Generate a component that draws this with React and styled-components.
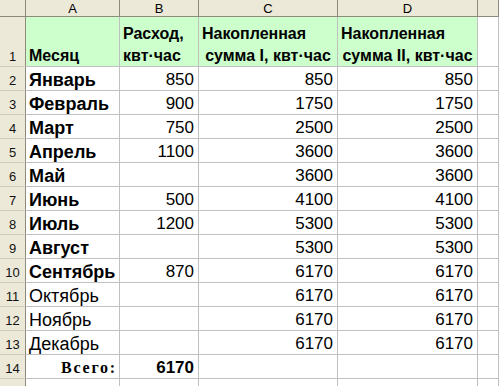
import React from "react";
import styled, { createGlobalStyle } from "styled-components";

const Global = createGlobalStyle`
  html, body { margin: 0; padding: 0; background: #fff; overflow: hidden; }
  body { font-family: "Liberation Sans", Arial, sans-serif; }
`;

const HEAD_LINE = "#8d8a7c";
const HEAD_SOFT = "#cfcbbd";
const GRID = "#c0c0c0";

const Sheet = styled.div`
  display: grid;
  grid-template-columns: 26px 94px 79px 139px 140px 1fr;
  grid-template-rows: 17px 50px repeat(14, 24px);
  width: 499px;
  height: 386px;
  overflow: hidden;
`;

const ColHead = styled.div`
  box-sizing: border-box;
  background: #ece9d8;
  border-right: 1px solid ${HEAD_LINE};
  border-bottom: 1px solid ${HEAD_LINE};
  display: flex;
  align-items: center;
  justify-content: center;
  font-size: 13px;
  line-height: 13px;
  color: #000;
  padding-top: 1px;
`;

const RowHead = styled.div`
  box-sizing: border-box;
  background: #ece9d8;
  border-right: 1px solid ${HEAD_LINE};
  border-bottom: 1px solid ${HEAD_SOFT};
  display: flex;
  align-items: flex-end;
  justify-content: center;
  font-size: 13px;
  line-height: 13px;
  padding-bottom: 3px;
  color: #111;
`;

const Cell = styled.div`
  box-sizing: border-box;
  background: ${(p) => (p.$green ? "#ccffcc" : "#fff")};
  border-right: 1px solid ${GRID};
  border-bottom: 1px solid ${GRID};
  display: flex;
  flex-direction: column;
  justify-content: flex-end;
  align-items: ${(p) => (p.$right ? "flex-end" : "stretch")};
  padding: 0 ${(p) => (p.$right ? "4px" : "0")} 2px ${(p) => (p.$right ? "0" : "3px")};
  font-size: 17px;
  line-height: 16px;
  font-weight: ${(p) => (p.$bold ? 700 : 400)};
  color: #000;
  white-space: nowrap;
  overflow: visible;
`;

const MonthCell = styled(Cell)`
  font-size: 18px;
`;

const HeadCell = styled(Cell)`
  gap: 6px;
  font-size: 16px;
  font-weight: 700;
`;

const Line = styled.span`
  display: block;
  text-align: ${(p) => p.$align || "left"};
  margin-right: ${(p) => (p.$align === "center" ? "3px" : "0")};
`;

const Total = styled.span`
  font-family: "Liberation Serif", "Times New Roman", serif;
  font-weight: 700;
  font-size: 16px;
  letter-spacing: 1.8px;
  margin-right: -2px;
`;

const rows = [
  ["Январь", "850", "850", "850", true],
  ["Февраль", "900", "1750", "1750", true],
  ["Март", "750", "2500", "2500", true],
  ["Апрель", "1100", "3600", "3600", true],
  ["Май", "", "3600", "3600", true],
  ["Июнь", "500", "4100", "4100", true],
  ["Июль", "1200", "5300", "5300", true],
  ["Август", "", "5300", "5300", true],
  ["Сентябрь", "870", "6170", "6170", true],
  ["Октябрь", "", "6170", "6170", false],
  ["Ноябрь", "", "6170", "6170", false],
  ["Декабрь", "", "6170", "6170", false],
];

export default function App() {
  return (
    <>
      <Global />
      <Sheet>
        <ColHead />
        <ColHead>A</ColHead>
        <ColHead>B</ColHead>
        <ColHead>C</ColHead>
        <ColHead>D</ColHead>
        <ColHead />

        <RowHead>1</RowHead>
        <HeadCell $green>
          <Line>Месяц</Line>
        </HeadCell>
        <HeadCell $green>
          <Line>Расход,</Line>
          <Line>квт·час</Line>
        </HeadCell>
        <HeadCell $green>
          <Line>Накопленная</Line>
          <Line $align="center">сумма I, квт·час</Line>
        </HeadCell>
        <HeadCell $green>
          <Line>Накопленная</Line>
          <Line $align="center">сумма II, квт·час</Line>
        </HeadCell>
        <Cell />

        {rows.map((r, i) => (
          <React.Fragment key={r[0]}>
            <RowHead>{i + 2}</RowHead>
            <MonthCell $bold={r[4]}>{r[0]}</MonthCell>
            <Cell $right>{r[1]}</Cell>
            <Cell $right>{r[2]}</Cell>
            <Cell $right>{r[3]}</Cell>
            <Cell />
          </React.Fragment>
        ))}

        <RowHead>14</RowHead>
        <Cell $right>
          <Total>Всего:</Total>
        </Cell>
        <Cell $right $bold>6170</Cell>
        <Cell />
        <Cell />
        <Cell />

        <RowHead>15</RowHead>
        <Cell />
        <Cell />
        <Cell />
        <Cell />
        <Cell />
      </Sheet>
    </>
  );
}
